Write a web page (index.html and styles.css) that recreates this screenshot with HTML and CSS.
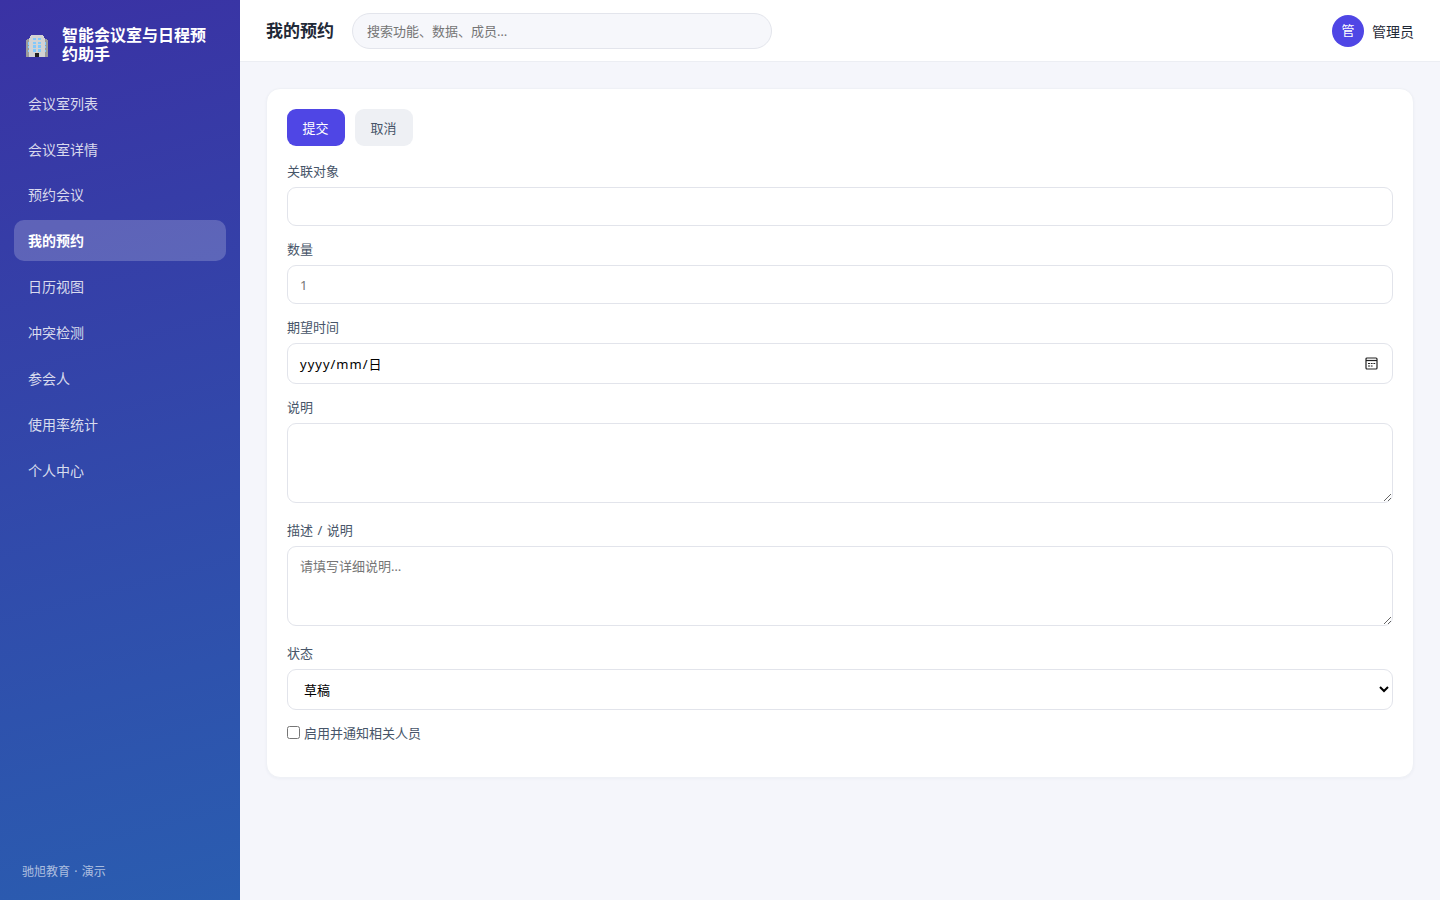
FILE: index.html
```html
<!DOCTYPE html>
<html lang="zh-CN">
<head>
    <meta charset="UTF-8">
    <meta name="viewport" content="width=device-width, initial-scale=1.0">
    <title>我的预约 - 智能会议室与日程预约助手</title>
    <link rel="stylesheet" href="styles.css">
</head>
<body>
    <aside class="sidebar">
        <div class="brand">
            <svg class="brand-icon" viewBox="0 0 22 22" shape-rendering="crispEdges">
                <path fill="#9b9b9b" d="M0 5h1V4h3v18H0zM18 4h3v1h1v17h-4z"/>
                <path fill="#d3d3d3" d="M3 3h1V1h1V0h12v1h1v2h1v19H3z"/>
                <path fill="#83c9fb" d="M7 3h3v2H7zM12 3h3v2h-3zM7 7h3v2H7zM12 7h3v2h-3zM7 10h3v3H7zM12 10h3v3h-3zM7 14h3v3H7zM12 14h3v3h-3zM2 7h1v3H2zM2 11h1v2H2zM2 15h1v2H2zM19 7h1v3h-1zM19 11h1v2h-1zM19 15h1v2h-1z"/>
                <path fill="#212121" d="M9 18h4v4H9z"/>
            </svg>
            <span>智能会议室与日程预约助手</span>
        </div>
        <nav class="nav">
            <a class="nav-item">会议室列表</a>
            <a class="nav-item">会议室详情</a>
            <a class="nav-item">预约会议</a>
            <a class="nav-item active">我的预约</a>
            <a class="nav-item">日历视图</a>
            <a class="nav-item">冲突检测</a>
            <a class="nav-item">参会人</a>
            <a class="nav-item">使用率统计</a>
            <a class="nav-item">个人中心</a>
        </nav>
        <div class="sidebar-foot">驰旭教育 · 演示</div>
    </aside>

    <div class="main">
        <header class="topbar">
            <h1>我的预约</h1>
            <input class="search" type="text" placeholder="搜索功能、数据、成员…">
            <div class="user">
                <span class="avatar">管</span>
                <span>管理员</span>
            </div>
        </header>

        <main class="content">
            <form class="card">
                <div class="toolbar">
                    <button class="btn btn-primary" type="button">提交</button>
                    <button class="btn" type="button">取消</button>
                </div>
                <div class="field">
                    <label for="target">关联对象</label>
                    <input class="control" id="target" type="text">
                </div>
                <div class="field">
                    <label for="count">数量</label>
                    <input class="control" id="count" type="text" placeholder="1">
                </div>
                <div class="field">
                    <label>期望时间</label>
                    <div class="control date">
                        <span class="date-text">yyyy/mm/日</span>
                        <svg class="date-icon" viewBox="0 0 13 13">
                            <rect x="1" y="1" width="11" height="11" rx="1" fill="none" stroke="#222" stroke-width="1.2"/>
                            <path d="M1 3.5h11" stroke="#222" stroke-width="1.2"/>
                            <path d="M3 6.5h2M5.8 6.5h1.8M8.4 6.5h1.8M3 9h2M5.8 9h1.8" stroke="#222" stroke-width="1.2"/>
                        </svg>
                    </div>
                </div>
                <div class="field field-area">
                    <label for="note">说明</label>
                    <textarea class="control" id="note"></textarea>
                </div>
                <div class="field field-area">
                    <label for="desc">描述 / 说明</label>
                    <textarea class="control" id="desc" placeholder="请填写详细说明…"></textarea>
                </div>
                <div class="field">
                    <label for="status">状态</label>
                    <select class="control" id="status">
                        <option>草稿</option>
                    </select>
                </div>
                <label class="check">
                    <input type="checkbox">
                    <span>启用并通知相关人员</span>
                </label>
            </form>
        </main>
    </div>
</body>
</html>
```
FILE: styles.css
```css
* {
    box-sizing: border-box;
}
body {
    margin: 0;
    height: 100vh;
    display: flex;
    font-family: "Noto Sans", "Noto Sans CJK SC", sans-serif;
    font-size: 14px;
    word-spacing: 1.1px;
    color: #1f2937;
    background: #f5f6fb;
}
input, textarea, select, button {
    font-family: inherit;
    font-size: 13px;
}

/* sidebar */
.sidebar {
    width: 240px;
    flex-shrink: 0;
    display: flex;
    flex-direction: column;
    padding: 26px 14px 18px;
    color: #fff;
    background: linear-gradient(165deg, #3a32a4, #2a5db0);
}
.brand {
    display: flex;
    align-items: center;
    gap: 14px;
    height: 38px;
    padding: 0 12px;
    font-size: 16px;
    font-weight: 600;
    line-height: 19px;
}
.brand-icon {
    width: 22px;
    height: 22px;
    flex-shrink: 0;
    margin-top: 2px;
}
.nav {
    margin-top: 18.8px;
    flex: 1;
}
.nav-item {
    display: block;
    height: 40.85px;
    margin-bottom: 5px;
    padding: 0 14px;
    border-radius: 10px;
    line-height: 41px;
    color: rgba(255, 255, 255, 0.82);
}
.nav-item.active {
    background: rgba(255, 255, 255, 0.2);
    color: #fff;
    font-weight: 700;
}
.sidebar-foot {
    padding-left: 8px;
    font-size: 12px;
    line-height: 20px;
    color: rgba(255, 255, 255, 0.62);
}

/* top bar */
.main {
    flex: 1;
    min-width: 0;
}
.topbar {
    display: flex;
    align-items: center;
    gap: 18px;
    height: 62px;
    padding: 0 26px;
    background: #fff;
    border-bottom: 1px solid #eceef3;
}
.topbar h1 {
    margin: 0;
    font-size: 17px;
    font-weight: 700;
    line-height: 26px;
}
.search {
    width: 420px;
    height: 36px;
    padding: 0 14px;
    border: 1px solid #e3e5ec;
    border-radius: 18px;
    background: #f6f7fb;
}
.user {
    display: flex;
    align-items: center;
    gap: 8px;
    margin-left: auto;
}
.avatar {
    width: 32px;
    height: 32px;
    border-radius: 50%;
    background: #4f46e5;
    color: #fff;
    font-size: 13px;
    line-height: 31px;
    text-align: center;
}

/* form */
.content {
    padding: 26px;
}
.card {
    height: 690px;
    padding: 20px;
    background: #fff;
    border: 1px solid #eff1f6;
    border-radius: 14px;
    box-shadow: 0 1px 3px rgba(30, 41, 90, 0.04);
}
.toolbar {
    display: flex;
    gap: 10px;
    margin-bottom: 16px;
}
.btn {
    width: 58px;
    height: 37px;
    padding: 0 1px 0 0;
    border: none;
    border-radius: 9px;
    background: #eef0f4;
    color: #475569;
}
.btn-primary {
    background: #4f46e5;
    color: #fff;
}
.field {
    margin-bottom: 14px;
}
.field-area {
    margin-bottom: 18px;
}
.field label {
    display: block;
    margin-bottom: 6px;
    font-size: 13px;
    line-height: 19px;
    color: #475569;
}
.control {
    display: block;
    width: 100%;
    height: 39px;
    padding: 9px 12px;
    border: 1px solid #e2e4eb;
    border-radius: 9px;
    background: #fff;
    color: #000;
}
textarea.control {
    height: 80px;
    line-height: 20px;
}
select.control {
    height: 41px;
}
.date {
    display: flex;
    align-items: center;
    justify-content: space-between;
    height: 41px;
    padding-right: 14px;
    font-size: 13px;
}
.date-text {
    letter-spacing: 1px;
}
.date-icon {
    width: 13px;
    height: 13px;
}
.check {
    display: flex;
    align-items: center;
    gap: 4px;
    font-size: 13px;
    line-height: 19px;
    color: #475569;
}
.check input {
    margin: 0 0 3px;
}
```
